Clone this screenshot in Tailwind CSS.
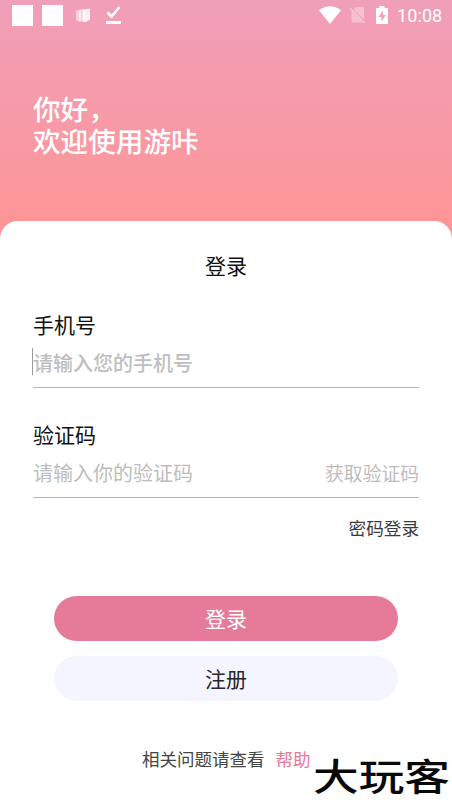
<!DOCTYPE html>
<html lang="zh-CN">
<head>
<meta charset="utf-8">
<title>登录</title>
<script src="https://cdn.jsdelivr.net/npm/@tailwindcss/browser@4"></script>
</head>
<body class="w-[452px] h-[803px] overflow-hidden bg-white font-['Noto_Sans_CJK_SC',sans-serif]">
<div class="relative flex flex-col w-[452px] h-[803px] overflow-hidden">
  <header class="h-[221px] shrink-0">
    <div class="absolute inset-x-0 top-0 h-[245px] -z-10 bg-linear-to-b from-[#f09fb9] to-[#ff9493]"></div>
    <div class="flex items-center justify-between h-[30px] pl-3 pr-[10px] text-white">
      <div class="flex items-center">
        <div class="size-[21px] bg-white"></div>
        <div class="size-[21px] bg-white ml-[9px]"></div>
        <svg class="ml-[13px]" width="15" height="15" viewBox="0 0 15 15" fill="#fff"><path opacity=".5" d="M0 2.5l5-1v11l-5 .5z"/><path opacity=".6" d="M3 2l6-1v12l-6 1z"/><path opacity=".85" d="M7 1.5l7-1v11l-4 2.5H7z"/></svg>
        <svg class="ml-[15px]" width="16" height="20" viewBox="0 0 16 20" fill="none" stroke="#fff"><path d="M1.5 7.5l4 4L13.5 2" stroke-width="2.6"/><path d="M0 17.5h15" stroke-width="3"/></svg>
      </div>
      <div class="flex items-center">
        <svg width="22" height="18" viewBox="0 0 22 18" fill="#fff"><path d="M0 4.2Q11-3.8 22 4.2L11 18z"/></svg>
        <svg class="ml-2" width="17" height="18" viewBox="0 0 17 18"><path d="M7 1h8v12.5L4.5 3.5zM2.5 5L14 16.5H2.5z" fill="#fff" opacity=".35"/><path d="M.8 2L15.5 17" stroke="#fff" stroke-width="1.5" opacity=".45"/></svg>
        <svg class="ml-[10px]" width="12" height="18" viewBox="0 0 12 18" fill="#fff"><path fill-rule="evenodd" d="M3.5 0h5v2H12v16H0V2h3.5zM7 4.5L2.5 11h3v4.5L9.8 9H7z"/></svg>
        <span class="ml-[9px] pt-[2px] w-[45px] whitespace-nowrap text-right font-['Roboto',sans-serif] text-[18px] leading-[22px] tracking-[.1px]">10:08</span>
      </div>
    </div>
    <h1 class="pt-[62px] pl-[33px] text-[27.6px] font-medium text-white"><span class="block leading-[32px]">你好，</span><span class="block leading-[32px]">欢迎使用游咔</span></h1>
  </header>
  <main class="flex flex-col flex-1 rounded-t-[18px] bg-white">
    <h2 class="pt-[28px] text-center text-[21px] leading-[32px] text-[#111]">登录</h2>
    <section class="mx-[33px] mt-[27px] h-[80px] border-b border-[#b5b5b5] flex flex-col">
      <label class="text-[21px] leading-[32px] text-[#111]">手机号</label>
      <div class="relative mt-[8px] text-[20px] leading-[30px] font-medium text-[#bebebe]"><span class="absolute -left-px top-0 w-px h-[27px] bg-[#999]"></span>请输入您的手机号</div>
    </section>
    <section class="mx-[33px] mt-[30px] h-[80px] border-b border-[#b5b5b5] flex flex-col">
      <label class="text-[21px] leading-[32px] text-[#111]">验证码</label>
      <div class="flex justify-between mt-[8px] leading-[30px] text-[#bdbdbd]"><span class="text-[20px]">请输入你的验证码</span><span class="text-[18.8px]">获取验证码</span></div>
    </section>
    <a class="self-end mr-[33px] mt-[17px] text-[17.6px] leading-[26px] text-[#3b3b3b]">密码登录</a>
    <button class="mx-[54px] mt-[55px] h-[45px] rounded-full bg-[#e67b99] text-white text-[21px] leading-[45px]">登录</button>
    <button class="mx-[54px] mt-[15px] h-[45px] rounded-full bg-[#f4f5fe] text-[#27272b] text-[21px] leading-[45px]">注册</button>
    <p class="mt-[45px] pl-[142px] text-[17.5px] leading-[26px] text-[#454545] whitespace-nowrap">相关问题请查看<span class="ml-[11px] text-[#e67b99]">帮助</span></p>
  </main>
  <div class="absolute left-[313px] top-[756px] origin-left scale-x-[1.17] text-[39px] leading-[39px] scale-y-[.95] font-medium text-[#090909] whitespace-nowrap">大玩客</div>
</div>
</body>
</html>
